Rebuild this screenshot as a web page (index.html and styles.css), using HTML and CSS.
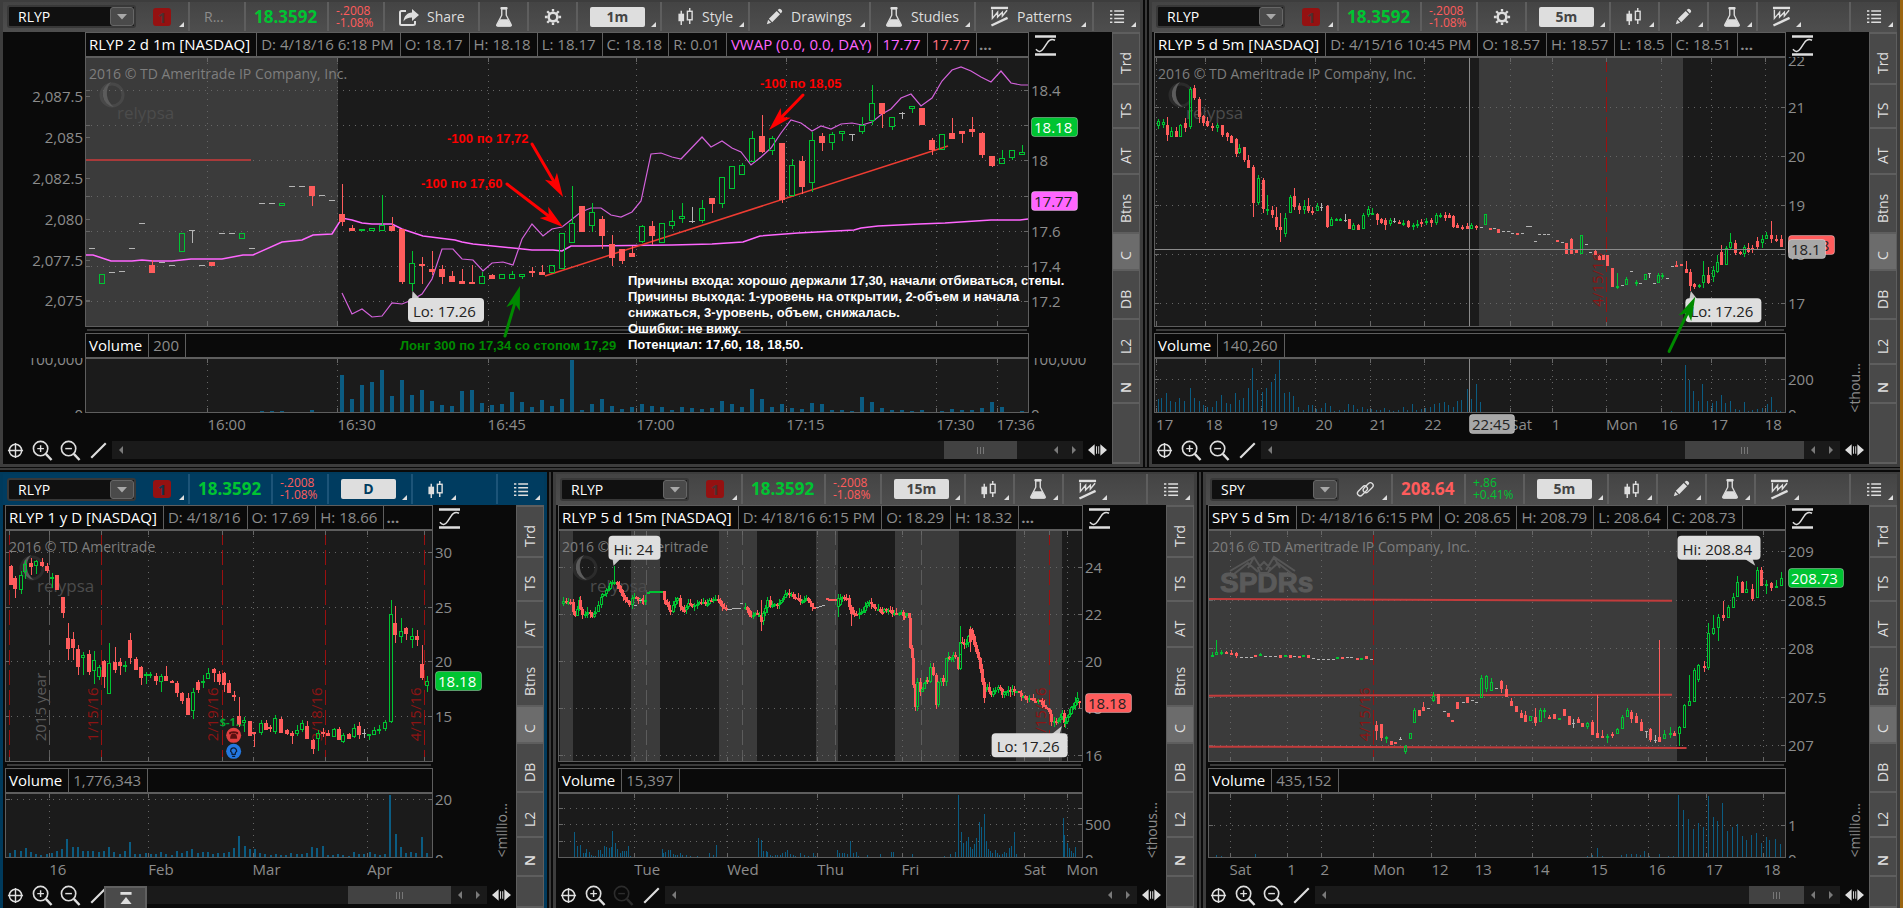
FILE: index.html
```html
<!DOCTYPE html>
<html lang="en">
<head>
<meta charset="utf-8">
<title>Flexible Grid</title>
<link rel="stylesheet" href="styles.css">
</head>
<body>
<svg class="sprite" aria-hidden="true">
  <symbol id="i-share" viewBox="0 0 22 18"><path d="M8 3H3.5Q2 3 2 4.500V15.500Q2 17 3.500 17H15Q17 17 17 15.500V13" fill="none" stroke="currentColor" stroke-width="2"/><path d="M14 1l7 6-7 6V9.500C10 9.500 7.500 10.500 5.500 13.500 6 8 9 5 14 4.500z" fill="currentColor"/></symbol>
  <symbol id="i-flask" viewBox="0 0 20 24"><path d="M7.500 3v7L2 20.500Q1.500 22 3 22H17Q18.500 22 18 20.500L12.500 10V3z" fill="none" stroke="currentColor" stroke-width="1.500"/><rect x="6" y="1" width="8" height="2.500" rx="1" fill="currentColor"/><path d="M5.600 14.500H14.400L18 21 17 22.500H3L2 21z" fill="currentColor"/></symbol>
  <symbol id="i-gear" viewBox="0 0 20 20"><circle cx="10" cy="10" r="4.800" fill="none" stroke="currentColor" stroke-width="2.800"/><path d="M10 1v3M10 16v3M1 10h3M16 10h3M3.600 3.600l2.200 2.200M14.200 14.200l2.200 2.200M3.600 16.400l2.200-2.200M14.200 5.800l2.200-2.200" stroke="currentColor" stroke-width="2.600"/></symbol>
  <symbol id="i-candles" viewBox="0 0 18 20"><path d="M4.500 4v15M13.500 1v4M13.500 13v5" stroke="currentColor" stroke-width="1.500"/><rect x="1.500" y="7" width="6" height="8" fill="currentColor"/><rect x="11" y="4.500" width="5" height="9" fill="none" stroke="currentColor" stroke-width="1.500"/></symbol>
  <symbol id="i-pencil" viewBox="0 0 20 20"><path d="M2 18l1.500-5L6.800 16.300z" fill="currentColor"/><path d="M4.300 12L13 3.300 16.700 7 8 15.700zM14 2.300L15.500 1Q16.500.3 17.600 1.400L18.700 2.500Q19.500 3.500 18.800 4.500L17.600 6z" fill="currentColor"/></symbol>
  <symbol id="i-patterns" viewBox="0 0 20 22"><path d="M1 2H19" stroke="currentColor" stroke-width="2.500"/><path d="M2.500 4v9L8 6.500v5l5-5v4L18 4.500" fill="none" stroke="currentColor" stroke-width="1.500"/><path d="M1.500 20.500L18.500 12.500" stroke="currentColor" stroke-width="2.500"/></symbol>
  <symbol id="i-menu" viewBox="0 0 16 16"><path d="M0 2h2.500M0 6h2.500M0 10h2.500M0 14h2.500M4.500 2H15M4.500 6H15M4.500 10H15M4.500 14H15" stroke="currentColor" stroke-width="1.600"/></symbol>
  <symbol id="i-link" viewBox="0 0 20 20"><g fill="none" stroke="currentColor" stroke-width="1.500" transform="rotate(-45 10 10)"><rect x="0" y="6.500" width="13" height="6" rx="3"/><rect x="7" y="8.500" width="13" height="6" rx="3"/></g></symbol>
  <symbol id="i-curve" viewBox="0 0 22 22"><path d="M0 1.500H22M0 20.500H22" stroke="currentColor" stroke-width="2.600"/><path d="M1 15Q5 20 9 14L13 8Q16 3 21 5.500" fill="none" stroke="currentColor" stroke-width="1.600"/></symbol>
  <symbol id="i-target" viewBox="0 0 18 18"><circle cx="9" cy="9" r="6.500" fill="none" stroke="currentColor" stroke-width="1.600"/><path d="M9 1V17M1 9H17" stroke="currentColor" stroke-width="1.500"/></symbol>
  <symbol id="i-plus" viewBox="0 0 22 22"><circle cx="9" cy="9" r="7.500" fill="none" stroke="currentColor" stroke-width="1.700"/><path d="M14.500 14.500L20.500 21" stroke="currentColor" stroke-width="2.500"/><path d="M5.500 9h7M9 5.500v7" stroke="currentColor" stroke-width="1.500"/></symbol>
  <symbol id="i-minus" viewBox="0 0 22 22"><circle cx="9" cy="9" r="7.500" fill="none" stroke="currentColor" stroke-width="1.700"/><path d="M14.500 14.500L20.500 21" stroke="currentColor" stroke-width="2.500"/><path d="M5.500 9h7" stroke="currentColor" stroke-width="1.500"/></symbol>
  <symbol id="i-line" viewBox="0 0 20 20"><path d="M1.500 18.500L18.500 1.500" stroke="currentColor" stroke-width="2.500"/></symbol>
  <symbol id="i-left" viewBox="0 0 6 8"><path d="M5 0V8L1 4z" fill="currentColor"/></symbol>
  <symbol id="i-right" viewBox="0 0 6 8"><path d="M1 0V8L5 4z" fill="currentColor"/></symbol>
  <symbol id="i-expand" viewBox="0 0 20 12"><path d="M7 0V12L0 6zM13 0V12L20 6zM8.500 2h1v8h-1zM10.800 2h1v8h-1z" fill="currentColor"/></symbol>
  <symbol id="i-down" viewBox="0 0 12 8"><path d="M0 1H12L6 7.500z" fill="currentColor"/></symbol>
  <symbol id="i-top" viewBox="0 0 12 14"><path d="M0 1.500H12" stroke="currentColor" stroke-width="3"/><path d="M6 5.500L12 13H0z" fill="currentColor"/></symbol>
</svg>

<main class="workspace">
  <div class="row row-top">
    <section class="panel" data-chart="m1" aria-label="RLYP 1 minute">
      <div class="toolbar">
        <div class="symbol"><label class="combo"><select aria-label="Symbol"><option>RLYP</option></select><span class="drop"><svg><use href="#i-down"/></svg></span></label><button class="badge">1</button><i class="corner"></i></div>
        <div class="cell name">R...</div>
        <div class="cell price up">18.3592</div>
        <div class="cell change down">-.2008<br>-1.08%</div>
        <button class="cell share"><svg class="ic-share"><use href="#i-share"/></svg>Share</button>
        <button class="cell flask" aria-label="Studies"><svg class="ic-flask"><use href="#i-flask"/></svg></button>
        <button class="cell gear" aria-label="Settings"><svg class="ic-gear"><use href="#i-gear"/></svg></button>
        <div class="cell interval"><button>1m</button><i class="corner"></i></div>
        <button class="cell style"><svg class="ic-candles"><use href="#i-candles"/></svg>Style<i class="corner"></i></button>
        <button class="cell drawings"><svg class="ic-gear"><use href="#i-pencil"/></svg>Drawings<i class="corner"></i></button>
        <button class="cell studies"><svg class="ic-flask"><use href="#i-flask"/></svg>Studies<i class="corner"></i></button>
        <button class="cell patterns"><svg class="ic-patterns"><use href="#i-patterns"/></svg>Patterns<i class="corner"></i></button>
        <span class="spacer"></span>
        <button class="cell menu" aria-label="Menu"><svg class="ic-menu"><use href="#i-menu"/></svg><i class="corner"></i></button>
      </div>
      <div class="body">
        <div class="stage wide">
          <div class="strip"><b>RLYP 2 d 1m [NASDAQ]</b><span>D: 4/18/16 6:18 PM</span><span>O: 18.17</span><span>H: 18.18</span><span>L: 18.17</span><span>C: 18.18</span><span>R: 0.01</span><span class="pink">VWAP (0.0, 0.0, DAY)</span><span class="pink">17.77</span><span class="salmon">17.77</span><em>...</em></div>
          <svg class="curve"><use href="#i-curve"/></svg>
          <svg class="laxis"></svg><svg class="plot"></svg><svg class="axis"></svg>
          <div class="splitter"></div>
          <div class="strip vhead"><b>Volume</b><span>200</span></div>
          <svg class="vlaxis"></svg><svg class="vol"></svg><svg class="vaxis"></svg>
          <svg class="times"></svg>
          <div class="scroll"><button class="tool" aria-label="Crosshair"><svg><use href="#i-target"/></svg></button><button class="tool" aria-label="Zoom in"><svg class="big"><use href="#i-plus"/></svg></button><button class="tool" aria-label="Zoom out"><svg class="big"><use href="#i-minus"/></svg></button><button class="tool" aria-label="Draw line"><svg class="ic-gear"><use href="#i-line"/></svg></button><div class="track"><button aria-label="Scroll left"><svg><use href="#i-left"/></svg></button><div class="rail"><span class="thumb" style="width:7.9%;margin-right:3.3%"></span></div><button aria-label="Page left"><svg><use href="#i-left"/></svg></button><button aria-label="Page right"><svg><use href="#i-right"/></svg></button></div><button class="expand" aria-label="Expand"><svg><use href="#i-expand"/></svg></button></div>
        </div>
        <nav class="tabs"><button class="t-trd">Trd</button><button class="t-ts">TS</button><button class="t-at">AT</button><button class="t-btns">Btns</button><button class="t-c active">C</button><button class="t-db">DB</button><button class="t-l2">L2</button><button class="t-n">N</button><span class="rest"></span></nav>
      </div>
    </section>
    <div class="divider"></div>
    <section class="panel" data-chart="m5" aria-label="RLYP 5 minutes">
      <div class="toolbar">
        <div class="symbol"><label class="combo"><select aria-label="Symbol"><option>RLYP</option></select><span class="drop"><svg><use href="#i-down"/></svg></span></label><button class="badge">1</button><i class="corner"></i></div>
        <div class="cell price up">18.3592</div>
        <div class="cell change down">-.2008<br>-1.08%</div>
        <button class="cell gear" aria-label="Settings"><svg class="ic-gear"><use href="#i-gear"/></svg></button>
        <div class="cell interval"><button>5m</button><i class="corner"></i></div>
        <button class="cell icon" aria-label="Style"><svg class="ic-candles"><use href="#i-candles"/></svg><i class="corner"></i></button>
        <button class="cell icon" aria-label="Drawings"><svg class="ic-gear"><use href="#i-pencil"/></svg><i class="corner"></i></button>
        <button class="cell icon" aria-label="Studies"><svg class="ic-flask"><use href="#i-flask"/></svg><i class="corner"></i></button>
        <button class="cell icon" aria-label="Patterns"><svg class="ic-patterns"><use href="#i-patterns"/></svg><i class="corner"></i></button>
        <span class="spacer"></span>
        <button class="cell menu" aria-label="Menu"><svg class="ic-menu"><use href="#i-menu"/></svg><i class="corner"></i></button>
      </div>
      <div class="body">
        <div class="stage">
          <div class="strip"><b>RLYP 5 d 5m [NASDAQ]</b><span>D: 4/15/16 10:45 PM</span><span>O: 18.57</span><span>H: 18.57</span><span>L: 18.5</span><span>C: 18.51</span><em>...</em></div>
          <svg class="curve"><use href="#i-curve"/></svg>
          <svg class="plot"></svg><svg class="axis"></svg>
          <div class="splitter"></div>
          <div class="strip vhead"><b>Volume</b><span>140,260</span></div>
          <svg class="vol"></svg><svg class="vaxis"></svg>
          <span class="unit">&lt;thou...</span>
          <svg class="times"></svg>
          <div class="scroll"><button class="tool" aria-label="Crosshair"><svg><use href="#i-target"/></svg></button><button class="tool" aria-label="Zoom in"><svg class="big"><use href="#i-plus"/></svg></button><button class="tool" aria-label="Zoom out"><svg class="big"><use href="#i-minus"/></svg></button><button class="tool" aria-label="Draw line"><svg class="ic-gear"><use href="#i-line"/></svg></button><div class="track"><button aria-label="Scroll left"><svg><use href="#i-left"/></svg></button><div class="rail"><span class="thumb" style="width:22.7%"></span></div><button aria-label="Page left"><svg><use href="#i-left"/></svg></button><button aria-label="Page right"><svg><use href="#i-right"/></svg></button></div><button class="expand" aria-label="Expand"><svg><use href="#i-expand"/></svg></button></div>
        </div>
        <nav class="tabs"><button class="t-trd">Trd</button><button class="t-ts">TS</button><button class="t-at">AT</button><button class="t-btns">Btns</button><button class="t-c active">C</button><button class="t-db">DB</button><button class="t-l2">L2</button><button class="t-n">N</button><span class="rest"></span></nav>
      </div>
    </section>
  </div>

  <div class="hdivider"></div>

  <div class="row row-bottom">
    <section class="panel focused" data-chart="d1" aria-label="RLYP daily">
      <div class="toolbar">
        <div class="symbol"><label class="combo"><select aria-label="Symbol"><option>RLYP</option></select><span class="drop"><svg><use href="#i-down"/></svg></span></label><button class="badge">1</button><i class="corner"></i></div>
        <div class="cell price up">18.3592</div>
        <div class="cell change down">-.2008<br>-1.08%</div>
        <div class="cell interval"><button>D</button><i class="corner"></i></div>
        <button class="cell icon" aria-label="Style"><svg class="ic-candles"><use href="#i-candles"/></svg><i class="corner"></i></button>
        <span class="spacer"></span>
        <button class="cell menu" aria-label="Menu"><svg class="ic-menu"><use href="#i-menu"/></svg><i class="corner"></i></button>
      </div>
      <div class="body">
        <div class="stage">
          <div class="strip"><b>RLYP 1 y D [NASDAQ]</b><span>D: 4/18/16</span><span>O: 17.69</span><span>H: 18.66</span><em>...</em></div>
          <svg class="curve"><use href="#i-curve"/></svg>
          <svg class="plot"></svg><svg class="axis"></svg>
          <div class="splitter"></div>
          <div class="strip vhead"><b>Volume</b><span>1,776,343</span></div>
          <svg class="vol"></svg><svg class="vaxis"></svg>
          <span class="unit">&lt;millio...</span>
          <svg class="times"></svg>
          <div class="scroll"><button class="tool" aria-label="Crosshair"><svg><use href="#i-target"/></svg></button><button class="tool" aria-label="Zoom in"><svg class="big"><use href="#i-plus"/></svg></button><button class="tool" aria-label="Zoom out"><svg class="big"><use href="#i-minus"/></svg></button><button class="tool" aria-label="Draw line"><svg class="ic-gear"><use href="#i-line"/></svg></button><button class="to-top" aria-label="Show tray"><svg><use href="#i-top"/></svg></button><div class="track"><button aria-label="Scroll left"><svg><use href="#i-left"/></svg></button><div class="rail"><span class="thumb" style="width:32%"></span></div><button aria-label="Page left"><svg><use href="#i-left"/></svg></button><button aria-label="Page right"><svg><use href="#i-right"/></svg></button></div><button class="expand" aria-label="Expand"><svg><use href="#i-expand"/></svg></button></div>
        </div>
        <nav class="tabs"><button class="t-trd">Trd</button><button class="t-ts">TS</button><button class="t-at">AT</button><button class="t-btns">Btns</button><button class="t-c active">C</button><button class="t-db">DB</button><button class="t-l2">L2</button><button class="t-n">N</button><span class="rest"></span></nav>
      </div>
    </section>
    <div class="divider"></div>
    <section class="panel" data-chart="m15" aria-label="RLYP 15 minutes">
      <div class="toolbar">
        <div class="symbol"><label class="combo"><select aria-label="Symbol"><option>RLYP</option></select><span class="drop"><svg><use href="#i-down"/></svg></span></label><button class="badge">1</button><i class="corner"></i></div>
        <div class="cell price up">18.3592</div>
        <div class="cell change down">-.2008<br>-1.08%</div>
        <div class="cell interval"><button>15m</button><i class="corner"></i></div>
        <button class="cell icon" aria-label="Style"><svg class="ic-candles"><use href="#i-candles"/></svg><i class="corner"></i></button>
        <button class="cell icon" aria-label="Studies"><svg class="ic-flask"><use href="#i-flask"/></svg><i class="corner"></i></button>
        <button class="cell icon" aria-label="Patterns"><svg class="ic-patterns"><use href="#i-patterns"/></svg><i class="corner"></i></button>
        <span class="spacer"></span>
        <button class="cell menu" aria-label="Menu"><svg class="ic-menu"><use href="#i-menu"/></svg><i class="corner"></i></button>
      </div>
      <div class="body">
        <div class="stage">
          <div class="strip"><b>RLYP 5 d 15m [NASDAQ]</b><span>D: 4/18/16 6:15 PM</span><span>O: 18.29</span><span>H: 18.32</span><em>...</em></div>
          <svg class="curve"><use href="#i-curve"/></svg>
          <svg class="plot"></svg><svg class="axis"></svg>
          <div class="splitter"></div>
          <div class="strip vhead"><b>Volume</b><span>15,397</span></div>
          <svg class="vol"></svg><svg class="vaxis"></svg>
          <span class="unit">&lt;thous...</span>
          <svg class="times"></svg>
          <div class="scroll"><button class="tool" aria-label="Crosshair"><svg><use href="#i-target"/></svg></button><button class="tool" aria-label="Zoom in"><svg class="big"><use href="#i-plus"/></svg></button><button class="tool" disabled aria-label="Zoom out"><svg class="big"><use href="#i-minus"/></svg></button><button class="tool" aria-label="Draw line"><svg class="ic-gear"><use href="#i-line"/></svg></button><div class="track"><button aria-label="Scroll left"><svg><use href="#i-left"/></svg></button><div class="rail"></div><button aria-label="Page left"><svg><use href="#i-left"/></svg></button><button aria-label="Page right"><svg><use href="#i-right"/></svg></button></div><button class="expand" aria-label="Expand"><svg><use href="#i-expand"/></svg></button></div>
        </div>
        <nav class="tabs"><button class="t-trd">Trd</button><button class="t-ts">TS</button><button class="t-at">AT</button><button class="t-btns">Btns</button><button class="t-c active">C</button><button class="t-db">DB</button><button class="t-l2">L2</button><button class="t-n">N</button><span class="rest"></span></nav>
      </div>
    </section>
    <div class="divider"></div>
    <section class="panel" data-chart="spy" aria-label="SPY 5 minutes">
      <div class="toolbar">
        <div class="symbol"><label class="combo"><select aria-label="Symbol"><option>SPY</option></select><span class="drop"><svg><use href="#i-down"/></svg></span></label><button class="link" aria-label="Link"><svg class="ic-gear"><use href="#i-link"/></svg></button><i class="corner"></i></div>
        <div class="cell price down narrow">208.64</div>
        <div class="cell change up">+.86<br>+0.41%</div>
        <div class="cell interval"><button>5m</button><i class="corner"></i></div>
        <button class="cell icon" aria-label="Style"><svg class="ic-candles"><use href="#i-candles"/></svg><i class="corner"></i></button>
        <button class="cell icon" aria-label="Drawings"><svg class="ic-gear"><use href="#i-pencil"/></svg><i class="corner"></i></button>
        <button class="cell icon" aria-label="Studies"><svg class="ic-flask"><use href="#i-flask"/></svg><i class="corner"></i></button>
        <button class="cell icon" aria-label="Patterns"><svg class="ic-patterns"><use href="#i-patterns"/></svg><i class="corner"></i></button>
        <span class="spacer"></span>
        <button class="cell menu" aria-label="Menu"><svg class="ic-menu"><use href="#i-menu"/></svg><i class="corner"></i></button>
      </div>
      <div class="body">
        <div class="stage">
          <div class="strip"><b>SPY 5 d 5m</b><span>D: 4/18/16 6:15 PM</span><span>O: 208.65</span><span>H: 208.79</span><span>L: 208.64</span><span>C: 208.73</span></div>
          <svg class="curve"><use href="#i-curve"/></svg>
          <svg class="plot"></svg><svg class="axis"></svg>
          <div class="splitter"></div>
          <div class="strip vhead"><b>Volume</b><span>435,152</span></div>
          <svg class="vol"></svg><svg class="vaxis"></svg>
          <span class="unit">&lt;millio...</span>
          <svg class="times"></svg>
          <div class="scroll"><button class="tool" aria-label="Crosshair"><svg><use href="#i-target"/></svg></button><button class="tool" aria-label="Zoom in"><svg class="big"><use href="#i-plus"/></svg></button><button class="tool" aria-label="Zoom out"><svg class="big"><use href="#i-minus"/></svg></button><button class="tool" aria-label="Draw line"><svg class="ic-gear"><use href="#i-line"/></svg></button><div class="track"><button aria-label="Scroll left"><svg><use href="#i-left"/></svg></button><div class="rail"><span class="thumb" style="width:11.6%"></span></div><button aria-label="Page left"><svg><use href="#i-left"/></svg></button><button aria-label="Page right"><svg><use href="#i-right"/></svg></button></div><button class="expand" aria-label="Expand"><svg><use href="#i-expand"/></svg></button></div>
        </div>
        <nav class="tabs"><button class="t-trd">Trd</button><button class="t-ts">TS</button><button class="t-at">AT</button><button class="t-btns">Btns</button><button class="t-c active">C</button><button class="t-db">DB</button><button class="t-l2">L2</button><button class="t-n">N</button><span class="rest"></span></nav>
      </div>
    </section>
  </div>
</main>
<script src="charts.js"></script>
</body>
</html>
```
FILE: styles.css
```css
* { box-sizing: border-box; }
html, body { height: 100%; }
body {
  margin: 0;
  background: #0a0a0a;
  color: #8c8c8c;
  font: 15px/20px "Open Sans", "Noto Sans", sans-serif;
  overflow: hidden;
}
button, select {
  margin: 0;
  padding: 0;
  border: 0;
  background: none;
  color: inherit;
  font: inherit;
}
svg { display: block; flex: none; }
.sprite { position: absolute; width: 0; height: 0; }

.workspace {
  height: 100vh;
  display: grid;
  grid-template-rows: minmax(0, 467fr) 5px minmax(0, 436fr);
  border-right: 3px solid #9b6510;
}
.row { display: grid; min-height: 0; }
.row-top { grid-template-columns: minmax(0, 1143fr) 6px minmax(0, 751fr); }
.row-bottom { grid-template-columns: minmax(0, 547fr) 6px minmax(0, 644fr) 6px minmax(0, 697fr); }
.divider { background: linear-gradient(90deg, #0a0a0a 2px, #3a3a3a 2px 4px, #0a0a0a 4px); }
.hdivider { background: linear-gradient(#0a0a0a 1px, #3a3a3a 1px 3px, #0a0a0a 3px); }

.panel {
  display: flex;
  flex-direction: column;
  min-height: 0;
  border: solid #3d3d3d;
  border-width: 2px 3px 3px;
}
.row-bottom .panel { border-bottom: 0; }
.panel.focused { border-color: #003a5c; }

/* toolbar */
.toolbar {
  display: flex;
  height: 30px;
  flex: none;
  padding-bottom: 1px;
  background: linear-gradient(#444, #4e4e4e);
  color: #dedede;
  font-size: 14px;
}
.row-bottom .toolbar { height: 31px; }
.focused .toolbar { background: #003c60; }
.symbol { position: relative; display: flex; align-items: center; width: 185px; padding-left: 4px; flex: none; }
.combo {
  display: flex;
  width: 129px;
  height: 23px;
  border: 2px solid #383838;
  border-radius: 3px;
  background: #101010;
}
.combo select { flex: 1; appearance: none; padding-left: 9px; color: #fff; outline: 0; }
.drop {
  width: 24px;
  display: grid;
  place-items: center;
  border: 1px solid #666;
  border-radius: 3px;
  background: #4a4a4a;
  color: #a8a8a8;
}
.drop svg { width: 10px; height: 7px; }
.badge {
  width: 18px;
  height: 18px;
  margin-left: 17px;
  border-radius: 3px;
  background: #951111;
  color: #4d3030;
  font-weight: 700;
  font-size: 15px;
  line-height: 18px;
}
.focused .badge { color: #16344c; }
.link { margin-left: 17px; }
.corner {
  position: absolute;
  right: 4px;
  bottom: 4px;
  width: 0;
  height: 0;
  border-left: 5px solid transparent;
  border-bottom: 5px solid #dedede;
}
.cell {
  position: relative;
  display: flex;
  align-items: center;
  flex: none;
  border-left: 2px solid #5e5e5e;
}
.focused .cell { border-left-color: #1c5478; }
.up { color: #00c432; }
.down { color: #ff5c5c; }
.name { width: 56px; padding-left: 14px; color: #8c8c8c; }
.price { width: 83px; padding-left: 8px; font-size: 17px; font-weight: 700; }
.price.narrow { width: 73px; }
.change { width: 56px; padding-left: 7px; font-size: 12px; line-height: 12px; }
.narrow + .change { width: 59px; }
.share { width: 95px; padding-left: 13px; gap: 7px; }
.flask, .gear { width: 49px; justify-content: center; }
.interval { width: 84px; padding-left: 12px; }
.interval button {
  width: 55px;
  height: 20px;
  border-radius: 2px;
  background: #dedede;
  color: #444;
  font-weight: 700;
}
.focused .interval button { color: #003c60; }
.style { width: 88px; padding-left: 15px; gap: 8px; }
.drawings { width: 121px; padding-left: 15px; gap: 8px; }
.studies { width: 105px; padding-left: 14px; gap: 8px; }
.patterns { width: 116px; padding-left: 14px; gap: 8px; }
.icon { width: 49px; padding-left: 14px; }
.spacer { flex: 1; }
.menu { width: 48px; justify-content: center; }
.ic-share { width: 22px; height: 18px; }
.ic-flask { width: 18px; height: 22px; }
.ic-gear { width: 18px; height: 18px; }
.ic-candles { width: 17px; height: 19px; }
.ic-patterns { width: 19px; height: 21px; }
.ic-menu { width: 15px; height: 15px; }

/* chart area */
.body { flex: 1; display: flex; min-height: 0; }
.stage {
  flex: 1;
  min-width: 0;
  display: grid;
  grid-template-columns: 2px minmax(0, 1fr) 83px;
  grid-template-rows: 25px minmax(0, 270fr) 6px 25px minmax(0, 55fr) 28px 18px 5px;
}
.stage.wide { grid-template-columns: 82px minmax(0, 1fr) 83px; }
.row-bottom .stage { grid-template-rows: 25px minmax(0, 232fr) 6px 25px minmax(0, 65fr) 28px 18px 4px; }
.strip {
  grid-area: 1 / 2;
  display: flex;
  border: 1px solid #5e5e5e;
  line-height: 23px;
  white-space: nowrap;
  overflow: hidden;
}
.strip b, .strip span { padding: 0 6px 0 4px; border-right: 1px solid #5e5e5e; font-weight: 400; }
.strip b { color: #fff; padding-left: 3px; }
.strip em { font-style: normal; padding-left: 2px; font-weight: 700; }
.strip .pink { color: #ff66ff; }
.strip .salmon { color: #ff7080; }
.vhead { grid-area: 4 / 2; }
.curve { grid-area: 1 / 3; width: 21px; height: 21px; margin: 3px 0 0 6px; color: #dedede; }
.plot, .vol, .axis, .vaxis, .laxis, .vlaxis, .times { width: 100%; height: 100%; }
.plot { grid-area: 2 / 2; overflow: visible; z-index: 1; pointer-events: none; }
.axis { grid-area: 2 / 3; }
.laxis { grid-area: 2 / 1; }
.vol { grid-area: 5 / 2; }
.vaxis { grid-area: 5 / 3; }
.vlaxis { grid-area: 5 / 1; }
.times { grid-area: 6 / 2; overflow: visible; }
.splitter { grid-area: 3 / 2; height: 2px; margin: 2px 2px 0; background: #3a3a3a; }
.unit {
  grid-area: 3 / 3 / 6 / 4;
  align-self: end;
  justify-self: end;
  margin-right: 4px;
  writing-mode: vertical-rl;
  transform: rotate(180deg);
  font-size: 14px;
  line-height: 20px;
}
svg text { fill: #8c8c8c; font-size: 15px; }
svg .mark { fill: #7e7e7e; font-size: 14px; }
svg .logo { fill: #4c4c4c; font-size: 17px; }
svg .spdr { fill: #5a5a5a; stroke: #5a5a5a; font: 700 28px "Liberation Sans", Arial, sans-serif; }
svg .event { fill: #8c1414; }
svg .note { font: 700 13px "Liberation Sans", Arial, sans-serif; }
svg .tiny { fill: #00a832; font-size: 11px; font-weight: 700; }

/* scroll bar */
.scroll { grid-area: 7 / 1 / 8 / 4; display: flex; align-items: center; color: #dedede; position: relative; }
.tool { width: 28px; height: 22px; display: grid; place-items: center; }
.tool:first-child { width: 25px; }
.tool:disabled { color: #2c2c2c; }
.tool svg { width: 17px; height: 17px; }
.tool svg.big { width: 21px; height: 21px; }
.track { flex: 1; display: flex; height: 18px; background: #1a1a1a; color: #7a7a7a; }
.track button { width: 18px; display: grid; place-items: center; }
.track svg { width: 6px; height: 8px; }
.rail { flex: 1; display: flex; justify-content: flex-end; }
.thumb {
  background: linear-gradient(90deg, #777 1px, transparent 1px 3px, #777 3px 4px, transparent 4px 6px, #777 6px) center / 7px 7px no-repeat #424242;
}
.expand { width: 29px; display: grid; place-items: center; }
.expand svg { width: 19px; height: 12px; }
.to-top {
  position: absolute;
  left: 101px;
  top: 0;
  width: 43px;
  height: 24px;
  display: grid;
  place-items: center;
  border: 2px solid #606060;
  background: #4a4a4a;
  z-index: 1;
}
.to-top svg { width: 12px; height: 13px; }

/* side tabs */
.tabs { flex: none; width: 28px; display: flex; flex-direction: column; gap: 2px; padding: 2px 1px 2px; background: #5e5e5e; }
.tabs button, .rest { writing-mode: vertical-rl; transform: rotate(180deg); background: #494949; color: #dedede; font-size: 14px; line-height: 26px; text-align: center; }
.tabs button { flex: none; padding-bottom: 9px; }
.tabs .active { background: #6c6c6c; }
.t-trd { height: 49px; }
.t-ts { height: 42px; }
.t-at { height: 44px; }
.t-btns { height: 57px; }
.t-c { height: 35px; }
.t-db { height: 47px; }
.t-l2 { height: 43px; }
.t-n { height: 37px; }
.tabs .t-n { font-weight: 600; }
.rest { flex: 1; }
```
FILE: charts.js
```js
const UP = '#00c432', DOWN = '#ff5c5c', FLAT = '#b4b4b4', EDGE = '#5e5e5e', BAR = '#0b5c82';

const charts = {
  m1: {
    x: [85, 1029], y: [57, 327], v: [358, 413], base: 412, body: 6, barW: 4, origin: 341.7, step: 10,
    sessions: [[86, 337.5]],
    grid: [[89.5, '18.4'], [124.6], [159.5, '18'], [195.5], [230.5, '17.6'], [265.5, '17.4'], [301, '17.2']],
    left: [[96, '2,087.5'], [137, '2,085'], [178, '2,082.5'], [218.5, '2,080'], [259.5, '2,077.5'], [299.5, '2,075']],
    cols: [[207.5, '16:00'], [337.5, '16:30'], [487.6, '16:45'], [636.3, '17:00'], [786.3, '17:15'], [936.3, '17:30'], [996.6, '17:36']],
    vgrid: [[359, '100,000'], [414, '0']], vleft: true, noVLines: true,
    candles: `d -25 248,g -24 274 284,d -23 272,d -22 271,d -21 248,d -20 223,r -19 260 265 273,d -18 262,d -17 265,g -16 233 252,d -15 230 230 243,d -14 265,r -13 262 266,d -12 233,d -11 233,g -10 233 239,d -9 248,d -8 203,d -7 203,g -6 203 206,d -5 186,d -4 186,r -3 186 186 196 206,d -2 195,d -1 200,
r 0 184 214 222 226,r 1 225 228 231,g 2 229 231,g 3 228 231,g 4 195 225 231,r 5 217 226 231,r 6 229 229 282 284,g 7 251 263 284 291,r 8 257 264 266 284,r 9 251 269 272 275,r 10 265 269 277 284,r 11 271 276 282,r 12 269 281 284,r 13 265 282 284,g 14 272 276 284,r 15 274 275 279,g 16 274 279,g 17 271 274 279,g 18 274 274 277 279,r 19 267 271 273 277,r 20 265 272 275,g 21 265 273,g 22 233 269,g 23 186 223 243,r 24 206 232,g 25 203 212 226 232,r 26 216 219 236 249,r 27 235 244 258 266,r 28 249 249 261 264,r 29 246 253 257,g 30 225 226 242 243,r 31 221 226 236 245,g 32 223 243,g 33 210 221 226 229,g 34 203 216 219 223,d 35 221 207 223,g 36 200 208 221 223,r 37 198 198 204 213,g 38 177 177 204 208,g 39 166 189,g 40 163 165 175,g 41 131 138 162,r 42 115 136 152 153,g 43 136 138 151 155,r 44 143 143 200 203,g 45 159 165 196,r 46 156 161 187 194,g 47 132 140 183 192,r 48 133 136 143 151,g 49 132 134 143 150,g 50 131 131 134 141,d 51 134 134 141,g 52 117 125 132 134,g 53 85 103 121 125,r 54 103 103 114 128,g 55 117 117 127 130,d 56 113 112 119,g 57 106 106 109 113,r 58 108 125,r 59 138 140 150 155,g 60 134 150,r 61 118 133 139,r 62 131 131 134 143,r 63 117 129 132 137,r 64 132 133 155 158,r 65 156 156 166 167,g 66 150 158 164,g 67 150 150 158 160,g 68 145 152 155`,
    bars: '-8 411,-7 411,-6 411,-3 410,' + [37,13,27,30,42,16,32,17,22,11,7,6,21,22,9,7,8,20,10,5,12,6,13,52,2,8,13,6,3,5,8,6,5,2,5,4,3,4,11,8,5,23,13,5,8,4,3,9,8,2,2,1,15,10,4,2,2,1,2,0,1,3,2,2,4,10,5,0,1].map((h, i) => `${i} ${412 - h}`).join(','),
    lines: [
      { c: '#ff66ff', w: 1.5, p: '86,255 93,255 111,261 132,261 142,260 153,261 172,261 191,259 222,259 243,255 253,255 282,242 302,240 313,235 332,234 342,218 352,220 362,223 372,224 392,224 402,229 423,236 455,240 462,242 473,244 513,248 532,250 553,250 562,251 571,246 588,246 672,245 712,244 743,242 760,236 798,233 854,230 861,228 878,226 919,224 945,223 991,220 1020,220 1028,219' },
      { c: '#d462dc', w: 1.2, p: '342,293 352,314 362,309 372,317 382,316 392,303 402,304 412,300 422,294 432,279 442,249 453,249 462,259 473,260 483,271 492,263 503,262 513,265 522,239 532,224 543,236 552,229 562,227 571,220 581,212 591,208 601,208 611,215 621,217 632,212 641,201 651,154 661,153 672,157 681,159 702,137 711,147 722,141 732,148 741,152 751,165 761,157 771,148 781,133 791,120 801,123 812,131 821,126 831,129 841,124 852,123 862,125 872,122 882,114 891,109 901,98 911,94 921,106 932,98 942,81 952,70 961,67 971,71 981,77 991,82 1001,71 1011,83 1021,85 1029,85' },
      { c: '#a83a3a', w: 2, p: '86,160 251,160' },
      { c: '#ee3c32', w: 1.5, p: '545,276 948,146' }
    ],
    logo: 'relypsa', mark: '2016 © TD Ameritrade IP Company, Inc.',
    tags: [[127, '18.18', UP, '#fff'], [201, '17.77', '#ff66ff', '#222']],
    callouts: [{ x: 408, y: 298, w: 76, t: 'Lo: 17.26', tip: [412.5, 291] }],
    arrows: [[532, 144, 563, 197, '#f00'], [507, 184, 563, 227, '#f00'], [803, 95, 769, 130, '#f00'], [505, 336, 520, 286, '#008a00']],
    notes: [[447, 143, '-100 по 17,72', '#f00'], [421, 188, '-100 по 17,60', '#f00'], [760, 88, '-100 по 18,05', '#f00'], [400, 350, 'Лонг 300 по 17,34 со стопом 17,29', '#008a00'],
      [628, 285, 'Причины входа: хорошо держали 17,30, начали отбиваться, степы.', '#fff'], [628, 301, 'Причины выхода: 1-уровень на открытии, 2-объем и начала', '#fff'], [628, 317, 'снижаться, 3-уровень, объем, снижалась.', '#fff'], [628, 333, 'Ошибки: не вижу.', '#fff'], [628, 349, 'Потенциал: 17,60, 18, 18,50.', '#fff']]
  },
  m5: {
    x: [48.7, 1330], y: [171, 981], v: [384, 549], base: 547, body: 3, barW: 1,
    sessions: [[708, 1122]],
    grid: [[180, '22', 1], [322, '21'], [469, '20'], [616, '19'], [763, '18'], [910, '17']],
    cols: [[53, '17'], [153, '18'], [265, '19'], [376, '20'], [486, '21'], [597, '22'], [771, 'Sat'], [855, '1'], [965, 'Mon', 'red'], [1076, '16'], [1178, '17'], [1287, '18']],
    events: [[948, 920, '4/15/16']],
    vgrid: [[448, '200'], [551, '0']],
    candles: `g 57 358 362 378 388,g 66 356 365 374 384,r 76 351 376 405 423,g 84 382 393 410,r 94 380 394 410,g 102 372 376 410,r 112 355 370 383 395,g 121 262 267 382 386,r 130 255 264 294 300,r 139 290 296 350 370,r 148 345 348 368 378,r 157 350 362 378 382,r 167 370 378 384 392,g 177 368 376 384 396,r 186 374 376 404 412,r 196 395 400 412 422,r 205 405 408 430,r 214 414 418 462 472,g 222 432 444 458 462,r 232 440 442 480 487,r 240 466 480 503,r 250 495 500 608 650,g 259 525 534 608 616,r 269 534 540 628 640,g 278 585 626 634 644,r 287 618 630 645 655,r 297 620 650 682 690,r 305 640 680 690 725,g 314 640 655 702 712,g 324 585 592 640,r 333 564 588 622 630,r 343 610 618 630 642,g 352 600 618 630 642,r 361 595 618 632 638,r 370 620 632 638 645,g 379 608 618 634,d 388 620 610 632,r 399 615 618 680 685,g 408 652 658 678,g 417 655 658 664,g 426 654 658 664,d 435 660 642 665,r 444 656 658 688,g 453 670 675 689,r 462 672 676 689,g 472 640 645 688,g 482 618 628 645 652,g 491 625 638 642,r 500 640 642 660 675,r 509 655 658 668 672,r 518 655 660 675 690,g 527 655 660 672 678,d 536 662 655 668,r 545 660 665 672,g 554 660 668 672 678,r 563 660 664 680 685,g 573 670 675 682 690,g 582 660 672 678 685,r 591 658 665 672 680,g 600 655 662 670 676,r 610 655 660 670 680,g 620 638 645 668 675,g 629 640 644 648 655,r 638 635 645 655 662,r 646 640 645 655,r 655 645 648 680 685,r 664 670 676 684,r 673 675 680 685 690,r 683 668 678 688,g 692 668 676 688,r 701 675 678 682 690,d 711 680,g 720 643 675,r 729 684 687,d 738 683,r 747 687 698,d 756 694,d 766 694,d 775 700,r 784 699 705,d 794 700,d 804 679,d 812 679,d 822 724,d 830 703,d 839 703,d 848 703,r 866 720 724,d 876 725,r 884 728 762,r 895 714 716 762,r 905 748 750 760,g 914 704 761,d 924 733,d 932 756,r 943 748 752 766,r 950 765 768 780,r 959 766 780,r 968 764 766 798,r 978 805 862,g 987 818 858 864 868,d 997 856,g 1005 832 836 856,d 1015 814,g 1025 840 846 850 858,d 1034 850,g 1044 822 840,d 1052 820 820 835,d 1062 850,g 1070 820 824 850,g 1079 820 824 830 836,d 1088 835,d 1098 799,r 1106 783 796 800,r 1117 792 798,r 1127 782 806 820,r 1135 808 816 858 873,r 1144 850 852 862 868,g 1153 852 856 860 864,g 1162 784 826 850 864,r 1171 800 826 848 852,g 1181 798 810 832 845,g 1190 765 786 816 820,r 1199 735 756 796,g 1208 738 744 794,g 1217 700 726 744 748,r 1227 720 728 758 764,r 1236 752 756 760 764,g 1245 736 742 762 772,r 1253 730 744 756 760,r 1262 735 744 750 758,r 1271 710 724 742 748,g 1281 705 716 730 745,g 1290 695 706 718,r 1299 663 706 718 730,r 1309 705 716 720 726,r 1319 705 718 740`,
    bars: '57 507,63 503,73 489,82 514,91 517,100 505,110 514,121 474,129 505,139 512,148 526,157 532,166 532,175 514,184 495,194 518,203 523,212 489,221 510,230 503,239 474,248 414,258 480,267 487,276 474,285 455,295 432,303 390,312 489,322 487,331 498,341 532,350 539,360 525,369 526,378 537,387 535,396 518,405 528,414 543,424 540,433 539,443 523,452 525,461 536,470 530,480 537,489 537,498 541,507 540,516 535,525 541,534 543,544 539,553 532,562 539,571 523,580 541,590 537,599 534,608 530,617 522,626 518,636 516,645 526,654 530,663 513,672 510,683 477,692 506,701 462,710 516,1097 543,1125 405,1133 450,1142 482,1151 512,1160 462,1170 514,1180 518,1189 514,1198 495,1207 518,1216 512,1226 536,1235 541,1244 516,1253 543,1262 540,1271 537,1281 534,1291 523,1300 501,1309 540,1318 543',
    logo: 'relypsa', mark: '2016 © TD Ameritrade IP Company, Inc.',
    cross: [687, 748, '22:45', '18.1'],
    tags: [[735, '18.18', DOWN, '#222'], [747, '18.1', '#a8a8a8', '#222', 38]],
    callouts: [{ x: 1126, y: 895, w: 76, t: 'Lo: 17.26', tip: [1137, 873] }],
    arrows: [[1093, 1054, 1146, 890, '#008a00']]
  },
  d1: {
    x: [14, 1212], y: [195, 891], v: [339, 534], base: 531, body: 4, barW: 2,
    sessions: [],
    grid: [[262, '30'], [427, '25'], [589, '20'], [754, '15']],
    cols: [[24, '', 'red'], [138, '16', 'gray'], [284, '', 'red'], [415, 'Feb'], [620, '', 'red'], [707, 'Mar'], [911, '', 'red'], [1028, 'Apr'], [1188, '', 'red']],
    events: [[114, 829, '2015 year', '#5a5a5a'], [260, 829, '1/15/16'], [596, 829, '2/19/16'], [887, 829, '3/18/16'], [1164, 829, '4/15/16']],
    vgrid: [[358, '20'], [536, '0']],
    candles: `r 30 300 303 360,r 43 333 339 372 399,g 58 318 330 374 387,g 71 285 297 320 342,r 86 279 294 306 330,g 102 285 289 303 327,r 117 279 291 303 306,r 131 294 303 318 325,g 145 325 336 342 370,r 160 330 375,r 176 396 396 444 459,r 190 474 519 552 585,r 204 500 521 549 585,r 218 540 552 606 630,g 232 561 570 580 630,r 248 555 567 621 630,g 262 558 585 618 657,g 277 600 605 636 645,r 291 585 587 636 670,g 305 534 594 686,r 321 545 591 615 624,r 336 579 591 603 630,g 349 588 600 606 621,r 363 504 525 579 597,r 380 576 582 615,r 394 603 606 639 660,g 408 620 627 632 657,g 421 622 627 632 640,r 436 625 633 648 660,g 452 627 632 650 680,r 466 603 633 648,r 481 645 648 655,r 495 648 655 683 695,r 509 680 685 709 716,r 525 685 699 750,g 539 670 682 738 762,r 554 645 650 675 685,g 568 630 648 655 670,g 582 609 624 642,r 599 609 612 624 650,r 613 618 626 650 660,r 628 621 624 660 680,r 641 645 655 683,r 656 678 690 694 708,r 670 697 753 780 785,g 684 755 766 773 800,r 700 768 813,r 712 800 801 806 846,g 730 765 774 804 810,r 744 765 774 795,r 757 780 787 792 800,g 771 750 759 800 806,r 787 756 762 803,r 803 792 795 806 810,r 817 798 805 813 836,g 831 780 795 808 812,g 845 766 774 794 800,r 859 768 783 822,r 876 822 825 852 866,g 890 795 804 822 858,r 904 790 800 806 816,r 918 795 804 812,g 935 788 792 816,r 950 786 792 824,g 961 804 810 830 835,r 976 805 808 823,g 990 777 790 815 820,r 1006 770 783 810 822,d 1020 803 793 820,g 1034 806 808 813 826,g 1048 786 795 810,g 1062 780 792 798 806,g 1079 765 770 793 798,g 1094 405 447 772 775,r 1107 422 474 510 533,g 1122 459 498 516 533,r 1136 486 489 507 525,g 1153 489 513 525 549,r 1167 495 513 525 543,r 1181 540 597 639 645,g 1195 633 649 663 680`,
    bars: '28 519,42 510,59 513,73 504,87 516,101 522,115 525,131 522,145 518,159 513,173 507,187 477,204 501,218 501,232 513,247 513,261 513,277 516,291 513,305 501,319 516,336 522,350 513,364 486,378 522,392 522,408 518,423 522,437 522,451 516,466 522,481 525,495 513,509 518,523 513,537 507,554 518,568 516,582 516,597 522,611 518,627 518,641 516,655 504,669 468,686 498,700 507,714 507,728 518,742 522,758 525,773 522,787 525,801 525,815 518,831 522,845 522,859 518,873 501,887 504,904 498,918 525,932 525,946 522,961 525,977 528,991 516,1005 522,1019 522,1035 516,1049 522,1063 525,1079 522,1092 345,1109 462,1122 501,1136 519,1151 516,1165 519,1181 471,1195 519',
    logo: 'relypsa', mark: '2016 © TD Ameritrade',
    tags: [[648, '18.18', UP, '#fff']], callouts: [], earnings: [654, 811]
  },
  m15: {
    x: [31, 1278], y: [195, 891], v: [339, 534], base: 531, body: 3, barW: 1,
    sessions: [[36, 67], [204, 273], [413, 504], [644, 696], [832, 984], [1118, 1228]],
    grid: [[307, '24'], [448, '22'], [589, '20'], [730, '18'], [871, '16']],
    cols: [[212, 'Tue'], [239, '', 'gray'], [433, 'Wed'], [469, '', 'gray'], [647, 'Thu'], [690, '', 'gray'], [847, 'Fri'], [894, '', 'gray'], [1138, 'Sat'], [1198, '', 'red'], [1239, 'Mon']],
    events: [[1178, 829, '4/15/16']],
    vgrid: [[385], [433, '500'], [484], [536, '0']],
    walk: ['38,418 60,410 66,440 72,452 80,405 88,450 100,440 112,456 120,440 132,395 145,375 155,355 163,350 170,360 180,385 190,405 200,420 206,400 225,402 238,404', '240,380 276,377', '278,378 282,405 290,420 298,440 305,420 313,398 320,425 330,435 340,415 350,425 365,410 380,418 395,405 410,405 420,425 430,433', '472,430 480,435 484,450 500,445 508,450 514,468 522,430 528,405 535,425 550,420 560,405 575,385 590,395 605,410 620,400 630,415 640,427', '664,400 690,403', '697,420 705,395 715,400 722,425 735,448 750,440 770,410 780,425 795,440 810,437 830,443 845,440 850,453 858,445 864,458 867,548 871,580 874,660 879,725 884,650 890,680 900,655 908,650 915,605 922,630 928,720 934,650 940,640 945,650 952,580 965,580 975,575 980,612 986,530 1000,535 1010,495 1018,540 1028,580 1038,650 1042,680 1050,665 1060,690 1075,665 1085,690 1100,675 1115,680 1130,695 1150,700 1170,705 1180,720 1195,735 1203,772 1218,765 1228,745 1232,775 1240,755 1250,725 1258,710 1268,715'],
    candles: 'd 434 433,d 440 432,d 447 429,d 454 429,d 460 428,d 466 415,d 646 427,d 653 424,d 660 421,d 214 421,d 226 405,g 163 302 350 355,r 514 405 455 470 497,g 697 388 400 425 455,r 728 420 430 447 482,g 985 484 535 570,r 1010 486 492 530 560,r 1043 640 655 700 713,g 1263 681 700 710 720',
    bars: '68 456,75 498,83 495,90 520,94 518,98 507,104 516,110 524,115 528,120 528,125 510,130 510,136 522,141 498,146 501,151 505,156 500,160 453,167 489,172 507,178 518,183 513,188 513,193 513,198 498,203 528,277 507,281 520,286 516,292 510,297 510,303 522,308 525,314 525,320 519,325 526,335 526,345 527,360 528,390 520,400 524,407 495,507 474,512 480,518 513,524 513,528 516,534 524,540 528,546 526,552 525,558 524,564 518,570 516,576 510,582 522,588 526,595 528,605 520,615 526,625 527,636 518,642 527,694 510,699 520,706 518,711 518,718 522,725 484,732 520,738 516,744 528,766 525,795 522,821 516,826 516,873 522,948 527,963 522,975 516,982 345,989 456,994 489,999 483,1004 471,1010 500,1015 507,1020 492,1025 475,1030 426,1035 441,1042 402,1047 483,1052 507,1058 513,1063 518,1068 510,1073 520,1079 525,1085 522,1090 516,1095 518,1103 503,1108 498,1115 456,1120 522,1230 414,1234 465,1239 489,1245 505,1250 513,1255 518,1260 501',
    logo: 'relypsa', mark: '2016 © TD Ameritrade',
    tags: [[714, '18.18', DOWN, '#222']],
    callouts: [{ x: 151, y: 212, w: 52, t: 'Hi: 24', tip: [163, 302], down: 1 }, { x: 1061, y: 805, w: 76, t: 'Lo: 17.26', tip: [1228, 783] }]
  },
  spy: {
    x: [39.6, 1310.6], y: [195, 891], v: [339, 534], base: 531, body: 3, barW: 1,
    sessions: [[39, 1071]],
    grid: [[259, '209'], [406, '208.5'], [550, '208'], [697, '207.5'], [841, '207']],
    cols: [[87, 'Sat'], [214, '1'], [287, '2'], [403, 'Mon', 'red'], [531, '12'], [626, '13'], [753, '14'], [881, '15'], [1008, '16'], [1134, '17'], [1261, '18']],
    events: [[384, 829, '4/15/16']],
    vgrid: [[436, '1'], [536, '0']],
    candles: `g 49 562 569 575,g 58 525 562 569,g 69 555 560 565 570,r 80 558 561 568,r 91 556 563 570,r 102 560 564 574 578,d 113 577,d 124 577,d 134 575,r 143 571 577,g 154 564 566 572,d 165 573,d 176 573,d 187 572,r 197 571 578,g 208 570 577,r 219 571 578,d 229 574,r 239 573 578,g 249 571 576,r 260 570 580,d 271 580,d 281 583,d 292 583,d 303 583,d 314 583,g 324 577 583,r 335 575 583,d 345 577,d 355 577,r 367 578 584,g 377 578 584,r 387 574 582,d 397 583,r 408 768 780 798 825,r 419 776 778 818 828,g 430 812 816 822 833,r 441 828 841,r 450 832 836,d 461 822 816 826,g 472 840 843 862 866,g 483 803 805 822,g 493 730 735 773,r 503 736 752,r 513 711 725 738,d 524 730,g 535 681 694 708 712,r 546 688 718,d 558 738,r 567 745 755,r 577 765 771,r 588 711 732,d 600 711,r 610 695 713,d 621 706,d 630 710,g 641 630 640 698,g 652 630 634 672 680,g 663 640 650 678,d 674 668,r 684 645 648 672 685,r 694 660 672 695,r 705 700 708 722,r 716 724 740,r 727 735 744 758,r 736 738 750 770,g 747 752 768,r 758 729 755 774 782,g 769 730 735 770,g 779 728 735 741 760,r 790 750 757 763,r 800 748 763,g 811 759 765,r 822 732 753,r 833 752 780,d 843 775 763 790,r 853 757 762 773,r 863 773 785,g 874 770 775 787 792,r 885 765 770 810,r 896 690 804 820,r 907 795 812 820,g 916 808 812 820 833,r 927 800 808 812 820,g 938 788 792 806,g 949 750 756 792,g 960 728 736 755,r 969 735 740 762 775,r 980 745 754 774,r 991 762 770 798,d 1002 797 797 820,r 1012 790 793 825 830,d 1022 824 810 835,r 1032 525 817 832,g 1043 796 806 823,g 1055 785 803 809 818,r 1065 797 804 812,g 1076 783 786 806 842,g 1086 718 720 790,g 1097 630 708 722,g 1108 610 615 711,g 1118 597 600 645 650,r 1130 588 604 610 620,g 1138 474 504 608 615,g 1149 450 490 506 510,g 1160 447 455 490 528,r 1171 408 450 460 468,g 1182 420 426 458,g 1193 384 396 430,g 1202 333 351 395,r 1213 348 351 384,g 1223 348 372 384,r 1235 357 372 402 408,g 1246 306 315 400,r 1255 306 315 362,g 1266 345 357 363 386,r 1277 350 354 370 378,g 1288 345 363 369,g 1299 321 339 363`,
    bars: '58 525,69 528,142 522,872 528,883 526,894 504,905 528,947 525,958 522,969 522,980 522,990 526,999 513,1010 528,1032 522,1052 528,1063 528,1074 345,1085 390,1096 417,1105 447,1116 429,1127 441,1138 348,1149 411,1159 423,1169 369,1180 453,1191 441,1202 432,1213 468,1222 480,1233 465,1244 459,1255 489,1266 471,1274 480,1286 477,1297 492',
    lines: [{ c: '#c23c3c', w: 2, p: '40,402 1060,407' }, { c: '#c23c3c', w: 2, p: '40,692 1060,689' }, { c: '#c23c3c', w: 2, p: '40,845 1092,849' }],
    logo: 'spdr', mark: '2016 © TD Ameritrade IP Company, Inc.',
    tags: [[340, '208.73', UP, '#fff', 56]],
    callouts: [{ x: 1072, y: 212, w: 83, t: 'Hi: 208.84', tip: [1243, 302], down: 1 }]
  }
};

/* Expands a list of turning points into a run of small candles. */
function walk(points) {
  const p = points.split(' ').map(s => s.split(',').map(Number));
  const out = [];
  let seed = 7;
  const rnd = () => (seed = seed * 16807 % 2147483647) / 2147483647;
  let prev = p[0][1];
  for (let i = 0; i < p.length - 1; i++) {
    const n = Math.max(1, Math.round((p[i + 1][0] - p[i][0]) / 5));
    for (let k = 1; k <= n; k++) {
      const x = p[i][0] + (p[i + 1][0] - p[i][0]) * k / n;
      const noise = p.length > 2 && k < n ? (rnd() - .5) * 14 : 0;
      const y = p[i][1] + (p[i + 1][1] - p[i][1]) * k / n + noise;
      const t = Math.min(prev, y), b = Math.max(prev, y), wick = p.length > 2 ? 14 : 0;
      out.push(`${y > prev ? 'r' : 'g'} ${x} ${t - rnd() * wick} ${t} ${Math.max(b, t + 4)} ${b + rnd() * wick}`);
      prev = y;
    }
  }
  return out;
}

const tag = (n, a, body = '') => `<${n} ${Object.entries(a).map(([k, v]) => `${k}="${v}"`).join(' ')}>${body}</${n}>`;
const rect = (x, y, w, h, fill) => tag('rect', { x, y, width: Math.max(0, w), height: Math.max(0, h), fill });
const line = (x1, y1, x2, y2, o = {}) => tag('line', { x1, y1, x2, y2, stroke: '#666', ...o });
const text = (x, y, s, o = {}) => tag('text', { x, y, ...o }, s);
const mid = v => Math.round(v) + .5;

function candle(e, c, X, Y) {
  const [kind, sx, ...v] = e.trim().split(' ');
  const x = Math.round(X((c.origin || 0) + sx * (c.step || 1)));
  const n = v.map(Number), half = Math.floor(c.body / 2);
  if (kind === 'd') {
    let s = rect(x - half, Math.round(Y(n[0])), c.body, 1, FLAT);
    if (n.length > 1) s += rect(x, Y(n[1]), 1, Y(n[2]) - Y(n[1]), FLAT);
    return s;
  }
  const h = n[0], t = n.length > 2 ? n[1] : n[0], b = n.length > 2 ? n[2] : n[1], l = n.length > 3 ? n[3] : b;
  const col = kind === 'g' ? UP : DOWN;
  const ty = Math.round(Y(t)), by = Math.max(ty + 2, Math.round(Y(b)));
  let s = rect(x, Y(h), 1, ty - Y(h), col) + rect(x, by, 1, Y(l) - by, col);
  if (kind === 'r') return s + rect(x - half, ty, c.body, by - ty, col);
  return s + tag('rect', { x: x - half + .5, y: ty + .5, width: c.body - 1, height: Math.max(1, by - ty - 1), fill: 'none', stroke: col });
}

function arrow(x1, y1, x2, y2, col) {
  const a = Math.atan2(y2 - y1, x2 - x1);
  const at = (d, o) => `${x2 - d * Math.cos(a) - o * Math.sin(a)},${y2 - d * Math.sin(a) + o * Math.cos(a)}`;
  const [bx, by] = at(14, 0).split(',');
  return line(x1, y1, bx, by, { stroke: col, 'stroke-width': 3, 'stroke-linecap': 'round' }) + tag('polygon', { points: [at(0, 0), at(24, 7), at(18, 0), at(24, -7)].join(' '), fill: col });
}

function pill(x, y, w, s, bg, fg) {
  return tag('rect', { x: x + .5, y: y - 9.5, width: w - 1, height: 19, rx: 3, fill: bg, stroke: '#fff', 'stroke-opacity': .35 }) + text(x + 3, y + 6, s, { style: `fill:${fg}` });
}

function draw(panel) {
  const c = charts[panel.dataset.chart], q = s => panel.querySelector(s);
  const plot = q('.plot'), vol = q('.vol');
  const { width: W, height: H } = plot.getBoundingClientRect();
  const VH = vol.getBoundingClientRect().height;
  const X = v => (v - c.x[0]) / (c.x[1] - c.x[0]) * W;
  const Y = v => (v - c.y[0]) / (c.y[1] - c.y[0]) * H;
  const V = v => (v - c.v[0]) / (c.v[1] - c.v[0]) * VH;
  const dots = { 'stroke-dasharray': '1 5' };

  let s = '<g shape-rendering="crispEdges">' + rect(0, 0, W, H, '#1b1b1b');
  c.sessions.forEach(([a, b]) => s += rect(X(a), 0, X(b) - X(a), H, '#3b3b3b'));
  c.grid.forEach(([y, , bare]) => { if (!bare) s += line(0, mid(Y(y)), W, mid(Y(y)), dots) + line(W - 5, mid(Y(y)), W, mid(Y(y))) + line(0, mid(Y(y)), 5, mid(Y(y))); });
  (c.left || []).forEach(([y]) => s += line(0, mid(Y(y)), 5, mid(Y(y))));
  c.cols.forEach(([x, , kind]) => {
    const px = mid(X(x));
    if (kind) s += line(px, 0, px, H, { stroke: kind === 'red' ? '#9a1010' : '#5c5c5c', 'stroke-dasharray': '15 5' });
    else s += line(px, 0, px, H, dots);
    s += line(px, 0, px, 5) + line(px, H - 5, px, H);
  });
  s += '</g>' + text(4, 22, c.mark, { class: 'mark' });
  if (c.logo === 'spdr') {
    s += text(12, 62, 'SPDRs', { class: 'spdr' });
    s += tag('path', { d: 'M22 41L46 27 54 40M26 44L40 33 50 42M46 27L40 38M87 41L66 27 58 40M84 44L70 33 60 42M66 27L72 38M50 38L56 32 62 38 60 43H52z', fill: 'none', stroke: '#565656', 'stroke-width': 2 });
  } else {
    s += tag('circle', { cx: 27, cy: 38, r: 11, fill: 'none', stroke: '#fff', 'stroke-opacity': .07, 'stroke-width': 3 });
    s += tag('path', { d: 'M26 25A13 13 0 0 0 29 50A17 17 0 0 1 26 25z', fill: '#5c5c5c' });
    s += text(32, 62, c.logo, { class: 'logo' });
  }
  (c.events || []).forEach(([x, y, t, col]) => s += text(0, 0, t, { class: 'event', transform: `translate(${X(x) + 5} ${Y(y)}) rotate(-90)`, ...(col ? { style: `fill:${col}` } : {}) }));
  (c.lines || []).forEach(l => s += tag('polyline', { points: l.p.split(' ').map(p => { const [a, b] = p.split(','); return X(+a) + ',' + Y(+b); }).join(' '), fill: 'none', stroke: l.c, 'stroke-width': l.w }));
  s += '<g shape-rendering="crispEdges">';
  (c.walk || []).forEach(w => walk(w).forEach(e => s += candle(e, c, X, Y)));
  c.candles.split(',').forEach(e => s += candle(e, c, X, Y));
  if (c.cross) s += line(mid(X(c.cross[0])), 0, mid(X(c.cross[0])), H, { stroke: '#8a8a8a' }) + line(0, mid(Y(c.cross[1])), W, mid(Y(c.cross[1])), { stroke: '#8a8a8a' });
  s += tag('rect', { x: .5, y: .5, width: W - 1, height: H - 1, fill: 'none', stroke: EDGE }) + '</g>';
  if (c.earnings) {
    const x = X(c.earnings[0]), y = Y(c.earnings[1]);
    s += text(x - 14, y - 9, '$-1...', { class: 'tiny' });
    s += tag('circle', { cx: x, cy: y, r: 7.5, fill: '#e04040' }) + tag('path', { d: `M${x - 4.500} ${y - 1}v-2q4.500-2 9 0v2h-2v-1h-5v1zM${x - 3.500} ${y + 3.500}q0-4 2-5h3q2 1 2 5z`, fill: '#5a1010' });
    s += tag('circle', { cx: x, cy: y + 16, r: 7.5, fill: '#2478e0' }) + tag('path', { d: `M${x - 1.500} ${y + 19}q0-2-1.500-3a3 3.500 0 1 1 6 0q-1.500 1-1.500 3zM${x - 1.500} ${y + 21}h3`, fill: 'none', stroke: '#0a1c38', 'stroke-width': 1.3 });
  }
  c.callouts.forEach(k => {
    const x = X(k.x), y = Y(k.y), tx = X(k.tip[0]), ty = Y(k.tip[1]);
    const bx = Math.min(Math.max(tx, x + 8), x + k.w - 12), by = k.down ? y + 23 : y + 1;
    s += tag('polygon', { points: `${tx},${ty} ${bx - 4},${by} ${bx + 4},${by}`, fill: '#c8c8c8' });
    s += tag('rect', { x, y, width: k.w, height: 24, rx: 4, fill: '#dedede' }) + text(x + 5, y + 19, k.t, { style: 'fill:#222' });
  });
  (c.arrows || []).forEach(([a, b, d, e, col]) => s += arrow(X(a), Y(b), X(d), Y(e), col));
  (c.notes || []).forEach(([x, y, t, col]) => s += text(X(x), Y(y), t, { class: 'note', style: `fill:${col}` }));
  plot.innerHTML = s;

  s = '';
  c.grid.forEach(([y, t]) => { if (t) s += text(2, Y(y) + 6, t); });
  (c.tags || []).forEach(([y, t, bg, fg, w]) => s += pill(2, Math.round(Y(y)), w || 47, t, bg, fg));
  q('.axis').innerHTML = s;
  if (c.left) q('.laxis').innerHTML = c.left.map(([y, t]) => text(80, Y(y) + 6, t, { 'text-anchor': 'end' })).join('');

  s = '<g shape-rendering="crispEdges">' + rect(0, 0, W, VH, '#1b1b1b');
  c.cols.forEach(([x, label]) => {
    if (!label) return;
    const px = mid(X(x));
    s += line(px, 0, px, VH, dots) + line(px, 0, px, 5) + line(px, VH - 5, px, VH);
  });
  if (!c.noVLines) c.vgrid.forEach(([y, t]) => { if (t !== '0') s += line(0, mid(V(y)), W, mid(V(y)), dots) + line(0, mid(V(y)), 5, mid(V(y))) + line(W - 5, mid(V(y)), W, mid(V(y))); });
  c.bars.split(',').forEach(e => {
    const [bx, by] = e.split(' ').map(Number);
    const x = Math.round(X((c.origin || 0) + bx * (c.step || 1)));
    s += rect(x - Math.floor(c.barW / 2), V(by), c.barW, V(c.base) - V(by), BAR);
  });
  if (c.cross) s += line(mid(X(c.cross[0])), 0, mid(X(c.cross[0])), VH, { stroke: '#8a8a8a' });
  s += tag('rect', { x: .5, y: .5, width: W - 1, height: VH - 1, fill: 'none', stroke: EDGE }) + '</g>';
  vol.innerHTML = s;

  q('.vaxis').innerHTML = c.vgrid.map(([y, t]) => t ? text(2, V(y) + 6, t) : '').join('');
  if (c.vleft) q('.vlaxis').innerHTML = c.vgrid.map(([y, t]) => text(80, V(y) + 6, t, { 'text-anchor': 'end' })).join('');

  s = c.cols.map(([x, t]) => t ? text(X(x), 17, t) : '').join('');
  if (c.cross) s += pill(Math.round(X(c.cross[0])), 11, 46, c.cross[2], '#a8a8a8', '#222');
  q('.times').innerHTML = s;
}

const drawAll = () => document.querySelectorAll('.panel').forEach(draw);
drawAll();
addEventListener('resize', drawAll);
```
